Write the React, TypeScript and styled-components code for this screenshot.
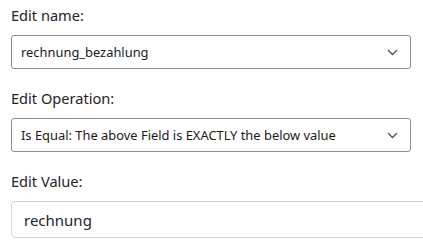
import React from 'react';
import styled, { createGlobalStyle } from 'styled-components';

const GlobalStyle = createGlobalStyle`
    body {
        margin: 0;
        background: #ffffff;
        font-family: "Noto Sans", "Open Sans", sans-serif;
    }
`;

const Page = styled.div`
    width: 423px;
    height: 247px;
    overflow: hidden;
`;

const Form = styled.div`
    padding: 3px 0 0 11px;
`;

const Field = styled.div`
    display: flex;
    flex-direction: column;
    margin-bottom: 17px;
`;

const Label = styled.label`
    font-size: 14.6px;
    line-height: 24px;
    color: #212529;
    margin-bottom: 8px;
`;

const SelectBox = styled.div`
    display: flex;
    align-items: center;
    width: 400px;
    height: 34px;
    box-sizing: border-box;
    border: 1px solid #8d8d8d;
    border-radius: 3px;
    padding: 0 10px 0 9px;
    font-size: 12.9px;
    color: #1a1a1a;
    background: #fff;
`;

const SelectText = styled.span`
    flex: 1;
    white-space: nowrap;
`;

const Chevron = styled.svg`
    width: 11px;
    height: 7px;
    margin-right: 2px;
`;

const TextInput = styled.div`
    display: flex;
    align-items: center;
    width: 440px;
    height: 37px;
    box-sizing: border-box;
    border: 1px solid #ced4da;
    border-radius: 4px;
    padding: 0 12px;
    font-size: 15px;
    color: #212529;
    background: #fff;
`;

const Select: React.FC<{ value: string }> = ({ value }) => (
    <SelectBox>
        <SelectText>{value}</SelectText>
        <Chevron viewBox="0 0 11 7">
            <path d="M1 1 L5.5 5.5 L10 1" fill="none" stroke="#555" strokeWidth="1.4" />
        </Chevron>
    </SelectBox>
);

const App: React.FC = () => (
    <Page>
        <GlobalStyle />
        <Form>
            <Field>
                <Label>Edit name:</Label>
                <Select value="rechnung_bezahlung" />
            </Field>
            <Field>
                <Label>Edit Operation:</Label>
                <Select value="Is Equal: The above Field is EXACTLY the below value" />
            </Field>
            <Field>
                <Label>Edit Value:</Label>
                <TextInput>rechnung</TextInput>
            </Field>
        </Form>
    </Page>
);

export default App;
